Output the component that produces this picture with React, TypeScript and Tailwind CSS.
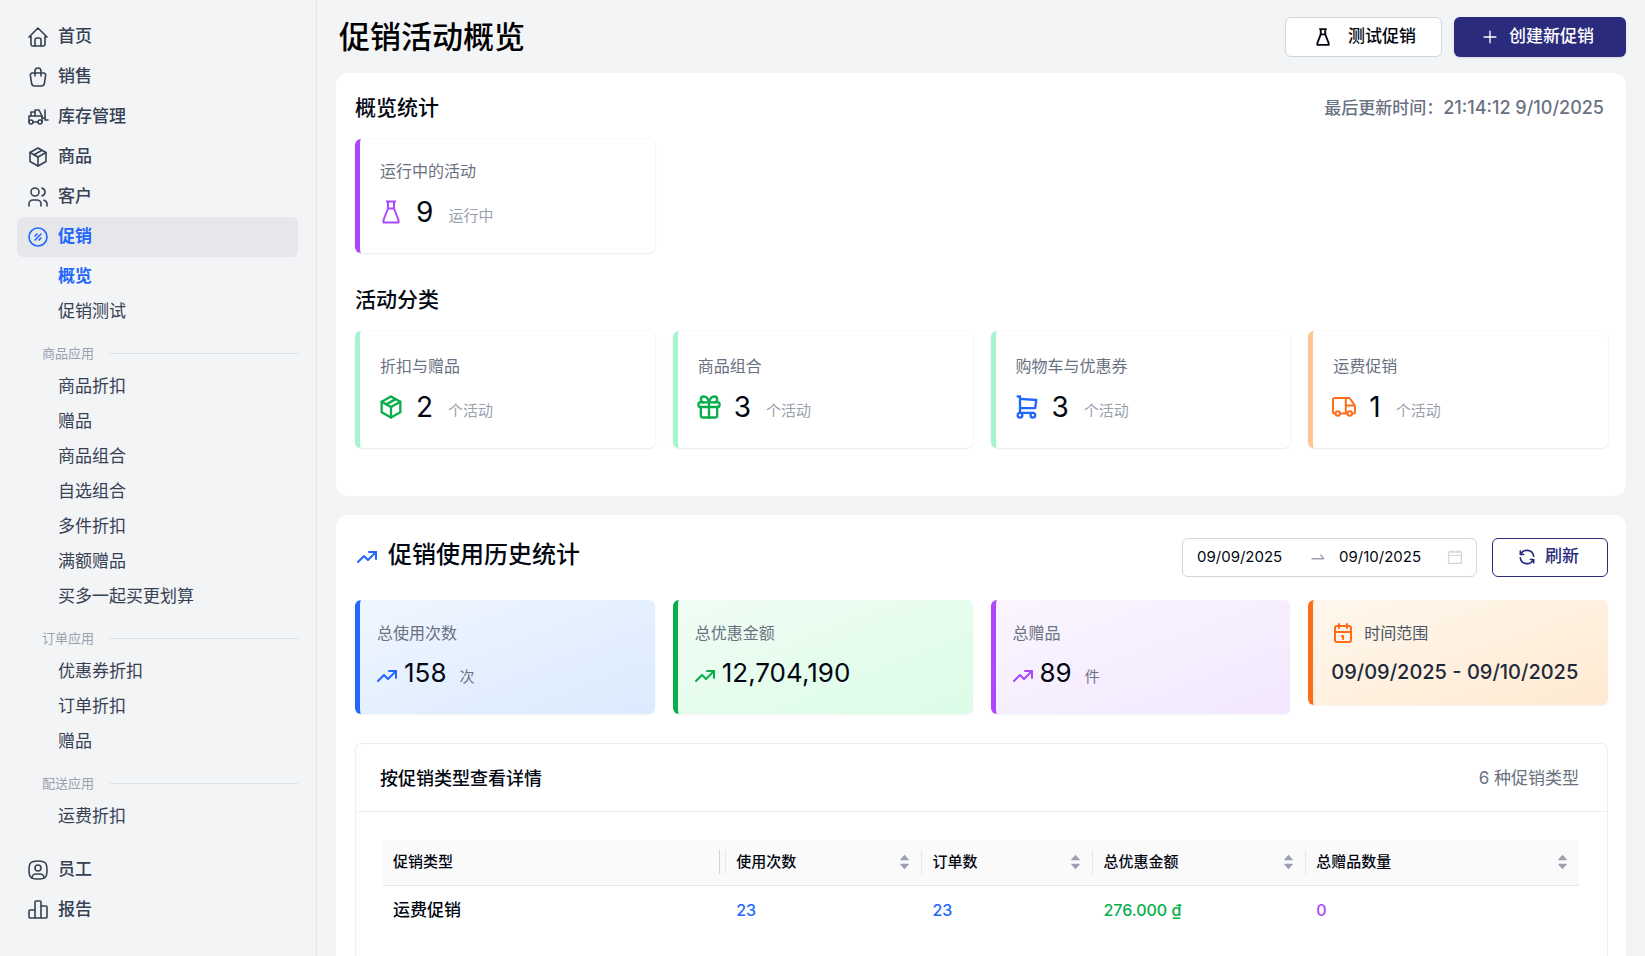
import type { ReactNode } from "react"
import { AiFillCaretDown, AiFillCaretUp, AiOutlineCalendar, AiOutlinePlus, AiOutlineSwapRight } from "react-icons/ai"
import {
  TbCalendar,
  TbForklift,
  TbGift,
  TbHome,
  TbPackage,
  TbRefresh,
  TbShoppingBag,
  TbShoppingCart,
  TbTrendingUp,
  TbUsers,
  TbUserSquareRounded,
} from "react-icons/tb"
import clsx from "clsx"

const navIcon = { size: 24, strokeWidth: 1.6 }

function PromoIcon() {
  return (
    <svg width="24" height="24" viewBox="0 0 24 24" fill="none" stroke="currentColor" strokeWidth="1.6" strokeLinecap="round">
      <circle cx="12" cy="12" r="9" />
      <path d="M9 15l6-6M9 11l2-2M13 15l2-2" />
    </svg>
  )
}

function ReportIcon() {
  return (
    <svg width="24" height="24" viewBox="0 0 24 24" fill="none" stroke="currentColor" strokeWidth="1.6" strokeLinejoin="round">
      <path d="M9 20H4a1 1 0 0 1-1-1v-6a1 1 0 0 1 1-1h5" />
      <path d="M9 20V4a1 1 0 0 1 1-1h4a1 1 0 0 1 1 1v16z" />
      <path d="M15 8h5a1 1 0 0 1 1 1v10a1 1 0 0 1-1 1h-5" />
    </svg>
  )
}

function FlaskIcon({ size = 24, strokeWidth = 2 }: { size?: number; strokeWidth?: number }) {
  return (
    <svg
      width={size}
      height={size}
      viewBox="0 0 24 24"
      fill="none"
      stroke="currentColor"
      strokeWidth={strokeWidth}
      strokeLinejoin="round"
    >
      <path d="M7 1.5h10M9 1.5v7L4.5 20v2.5h15V20L15 8.5v-7M9 8.5h6" />
    </svg>
  )
}

function TruckIcon() {
  return (
    <svg width="24" height="24" viewBox="0 0 24 24" fill="none" stroke="currentColor" strokeWidth="2" strokeLinejoin="round">
      <path d="M3.6 18.5H2.5A1.5 1.5 0 0 1 1 17V4.5A1.5 1.5 0 0 1 2.5 3h15l4.4 6.2c.7 1 1.1 1.6 1.1 2.8v5a1.5 1.5 0 0 1-1.5 1.5H20" />
      <path d="M13.8 3v15.5M8 18.5h7.5M13.8 10.5h8.700" />
      <circle cx="5.8" cy="18.5" r="2.2" />
      <circle cx="17.8" cy="18.5" r="2.2" />
    </svg>
  )
}

function NavItem({ icon, label, active }: { icon: ReactNode; label: string; active?: boolean }) {
  return (
    <a
      href="#"
      className={clsx(
        "flex h-10 items-center gap-2 rounded-md px-[9px] text-[17px]",
        active ? "bg-gray-200 font-semibold text-[#2266fb]" : "font-medium text-gray-700",
      )}
    >
      {icon}
      <span>{label}</span>
    </a>
  )
}

function SubItem({ label, active }: { label: string; active?: boolean }) {
  return (
    <a
      href="#"
      className={clsx(
        "flex h-[35px] items-center pl-[41px] text-[17px]",
        active ? "font-semibold text-[#2266fb]" : "text-gray-700",
      )}
    >
      {label}
    </a>
  )
}

function SubGroup({ title, items }: { title: string; items: string[] }) {
  return (
    <div>
      <div className="flex items-center gap-4 pt-[14px] pb-[6px] pl-[25px] text-[13px] leading-5 text-gray-400">
        {title}
        <span className="h-px flex-1 bg-gray-300/70" />
      </div>
      {items.map((item) => (
        <SubItem key={item} label={item} />
      ))}
    </div>
  )
}

function Sidebar() {
  return (
    <aside className="w-[317px] shrink-0 border-r border-gray-200 py-[17px] pr-[18px] pl-[17px]">
      <nav>
        <NavItem icon={<TbHome {...navIcon} />} label="首页" />
        <NavItem icon={<TbShoppingBag {...navIcon} />} label="销售" />
        <NavItem icon={<TbForklift {...navIcon} />} label="库存管理" />
        <NavItem icon={<TbPackage {...navIcon} />} label="商品" />
        <NavItem icon={<TbUsers {...navIcon} />} label="客户" />
        <NavItem icon={<PromoIcon />} label="促销" active />
        <div className="mt-[2px] mb-4">
          <SubItem label="概览" active />
          <SubItem label="促销测试" />
          <SubGroup
            title="商品应用"
            items={["商品折扣", "赠品", "商品组合", "自选组合", "多件折扣", "满额赠品", "买多一起买更划算"]}
          />
          <SubGroup title="订单应用" items={["优惠券折扣", "订单折扣", "赠品"]} />
          <SubGroup title="配送应用" items={["运费折扣"]} />
        </div>
        <NavItem icon={<TbUserSquareRounded {...navIcon} />} label="员工" />
        <NavItem icon={<ReportIcon />} label="报告" />
      </nav>
    </aside>
  )
}

interface CountCardProps {
  label: string
  value: number
  unit: string
  icon: ReactNode
  card: string
}

function CountCard({ label, value, unit, icon, card }: CountCardProps) {
  return (
    <div
      className={clsx(
        "rounded-md border-l-[5px] pb-[23px] pl-[17px] shadow-[0_0_2px_rgba(0,0,0,0.08),0_1px_2px_rgba(0,0,0,0.06)]",
        card,
      )}
    >
      <p className="pl-[3px] text-[16px] leading-7 text-gray-500">{label}</p>
      <div className="mt-[9px] flex items-center leading-9">
        <span className="mr-[11px] flex size-7 items-center justify-center">{icon}</span>
        <span className="text-[28px] text-gray-950">{value}</span>
        <span className="pt-2 pl-[15px] text-[15px] leading-7 text-gray-400">{unit}</span>
      </div>
    </div>
  )
}

interface UsageCardProps {
  label: string
  value: string
  unit?: string
  card: string
  iconColor: string
}

function UsageCard({ label, value, unit, card, iconColor }: UsageCardProps) {
  return (
    <div className={clsx("h-[114px] rounded-md border-l-[5px] bg-linear-to-br pt-[19px] pl-[15px] shadow-xs", card)}>
      <p className="pl-[2px] text-[16px] leading-7 text-gray-500">{label}</p>
      <div className="mt-2 flex items-center gap-[5px] leading-9">
        <TbTrendingUp size={24} className={clsx("mt-[6px]", iconColor)} />
        <span className="text-[26px] text-gray-950">{value}</span>
        {unit && <span className="pt-2 pl-2 text-[15px] leading-7 text-gray-500">{unit}</span>}
      </div>
    </div>
  )
}

function OverviewSection() {
  return (
    <section className="rounded-xl bg-white pt-[19px] pr-[18px] pb-12 pl-[19px]">
      <div className="flex items-center justify-between">
        <h2 className="text-[21px] leading-8 font-medium text-gray-950">概览统计</h2>
        <p className="pr-1 text-[17px] font-medium text-gray-500">
          最后更新时间：<span className="text-[18px]">21:14:12 9/10/2025</span>
        </p>
      </div>
      <div className="mt-[15px] grid grid-cols-4 gap-[18px]">
        <CountCard
          label="运行中的活动"
          value={9}
          unit="运行中"
          icon={<span className="text-purple-500"><FlaskIcon /></span>}
          card="border-purple-500 pt-[18px]"
        />
      </div>
      <h2 className="mt-[31px] text-[21px] leading-8 font-medium text-gray-950">活动分类</h2>
      <div className="mt-[15px] grid grid-cols-4 gap-[18px]">
        <CountCard
          label="折扣与赠品"
          value={2}
          unit="个活动"
          icon={<TbPackage size={28} className="text-[#08ae4c]" />}
          card="border-emerald-200 pt-[21px]"
        />
        <CountCard
          label="商品组合"
          value={3}
          unit="个活动"
          icon={<TbGift size={28} className="text-[#08ae4c]" />}
          card="border-emerald-200 pt-[21px]"
        />
        <CountCard
          label="购物车与优惠券"
          value={3}
          unit="个活动"
          icon={<TbShoppingCart size={28} className="text-[#2266fb]" />}
          card="border-emerald-200 pt-[21px]"
        />
        <CountCard
          label="运费促销"
          value={1}
          unit="个活动"
          icon={<span className="text-[#ff6d1b]"><TruckIcon /></span>}
          card="border-[#ffc78f] pt-[21px]"
        />
      </div>
    </section>
  )
}

const columns = [
  { title: "促销类型", width: "w-[28.7%]" },
  { title: "使用次数", width: "w-[16.4%]" },
  { title: "订单数", width: "w-[14.3%]" },
  { title: "总优惠金额", width: "w-[17.8%]" },
  { title: "总赠品数量", width: "w-[22.8%]" },
]

function DetailsTable() {
  return (
    <table className="w-full table-fixed text-left">
      <thead>
        <tr className="h-[45px] border-b border-gray-200 bg-neutral-50 text-[15px] text-gray-950">
          {columns.map((col, i) => (
            <th key={col.title} scope="col" className={clsx("font-medium", col.width)}>
              <div
                className={clsx(
                  "flex h-6 items-center justify-between pl-[10px]",
                  i < columns.length - 1 && "border-r border-gray-200",
                  i === 0 ? "pr-[5px]" : "pr-[10px]",
                )}
              >
                {col.title}
                {i === 0 ? (
                  <span className="h-6 w-px bg-gray-300" />
                ) : (
                  <button type="button" aria-label={`按${col.title}排序`} className="flex flex-col items-center text-gray-400">
                    <AiFillCaretUp size={13} className="-mb-[2px]" />
                    <AiFillCaretDown size={13} className="-mt-[2px]" />
                  </button>
                )}
              </div>
            </th>
          ))}
        </tr>
      </thead>
      <tbody>
        <tr className="h-[50px] text-[16px] font-medium">
          <td className="pl-[10px] text-[17px] text-gray-950">运费促销</td>
          <td className="pl-[10px] text-[#2266fb]">23</td>
          <td className="pl-[10px] text-[#2266fb]">23</td>
          <td className="pl-[10px] text-[#08ae4c]">276.000 ₫</td>
          <td className="pl-[10px] text-purple-500">0</td>
        </tr>
      </tbody>
    </table>
  )
}

function HistorySection() {
  return (
    <section className="flex flex-1 flex-col rounded-t-xl bg-white pt-[22px] pr-[18px] pl-[19px]">
      <div className="flex items-center justify-between">
        <div className="flex items-center gap-[9px] pb-1">
          <TbTrendingUp size={24} className="mt-1 text-[#2266fb]" />
          <h2 className="text-[24px] leading-9 font-medium text-gray-950">促销使用历史统计</h2>
        </div>
        <div className="flex items-center gap-[15px]">
          <div className="flex h-[39px] w-[295px] items-center rounded-md border border-gray-300 pr-3 pl-[14px] text-[15px] text-gray-950">
            <input type="text" aria-label="开始日期" defaultValue="09/09/2025" className="w-[112px] outline-none" />
            <AiOutlineSwapRight size={18} className="mr-3 shrink-0 text-gray-400" />
            <input type="text" aria-label="结束日期" defaultValue="09/10/2025" className="min-w-0 flex-1 outline-none" />
            <AiOutlineCalendar size={18} className="shrink-0 text-gray-300" />
          </div>
          <button
            type="button"
            className="flex h-[39px] w-[116px] items-center justify-center gap-2 rounded-md border border-[#2a2b7c] pr-1 text-[17px] font-medium text-[#2a2b7c]"
          >
            <TbRefresh size={20} />
            刷新
          </button>
        </div>
      </div>

      <div className="mt-[23px] grid grid-cols-4 items-start gap-[18px]">
        <UsageCard
          label="总使用次数"
          value="158"
          unit="次"
          card="border-[#2266fb] from-blue-50 to-blue-100"
          iconColor="text-[#2266fb]"
        />
        <UsageCard
          label="总优惠金额"
          value="12,704,190"
          card="border-[#08ae4c] from-green-50 to-green-100"
          iconColor="text-[#08ae4c]"
        />
        <UsageCard
          label="总赠品"
          value="89"
          unit="件"
          card="border-purple-500 from-purple-50 to-purple-100"
          iconColor="text-purple-500"
        />
        <div className="h-[105px] rounded-md border-l-[5px] border-[#ff6d1b] bg-linear-to-br from-orange-50 to-[#ffead2] pt-[19px] pl-[18px] shadow-xs">
          <p className="flex items-center gap-[9px] text-[16px] leading-7 text-gray-600">
            <TbCalendar size={24} className="text-[#ff6d1b]" />
            时间范围
          </p>
          <p className="mt-[7px] text-[20px] leading-9 font-medium text-gray-800">09/09/2025 - 09/10/2025</p>
        </div>
      </div>

      <div className="mt-[29px] flex-1 rounded-t-md border border-b-0 border-gray-200/70">
        <div className="flex h-[68px] items-center justify-between border-b border-gray-200/70 pt-[2px] pr-7 pl-6">
          <h3 className="text-[18px] font-medium text-gray-950">按促销类型查看详情</h3>
          <p className="text-[17px] text-gray-500">6 种促销类型</p>
        </div>
        <div className="pt-7 pr-7 pl-[27px]">
          <DetailsTable />
        </div>
      </div>
    </section>
  )
}

export default function App() {
  return (
    <div className="flex min-h-screen bg-gray-100 font-['Inter','Noto_Sans_CJK_SC',sans-serif]">
      <Sidebar />
      <main className="flex min-w-0 flex-1 flex-col px-[19px] pt-[17px]">
        <header className="mb-4 flex h-10 items-center justify-between">
          <h1 className="pl-[3px] text-[31px] font-medium text-black">促销活动概览</h1>
          <div className="flex gap-3">
            <button
              type="button"
              className="flex h-10 w-[157px] items-center justify-center gap-4 rounded-md border border-gray-300 bg-white pl-[3px] text-[17px] font-medium text-gray-950"
            >
              <FlaskIcon size={18} strokeWidth={2.5} />
              测试促销
            </button>
            <button
              type="button"
              className="flex h-10 w-[172px] items-center justify-center gap-[10px] rounded-md bg-[#2a2b7c] pr-[5px] text-[17px] font-medium text-white shadow"
            >
              <AiOutlinePlus size={18} />
              创建新促销
            </button>
          </div>
        </header>
        <div className="flex flex-1 flex-col gap-[19px]">
          <OverviewSection />
          <HistorySection />
        </div>
      </main>
    </div>
  )
}
